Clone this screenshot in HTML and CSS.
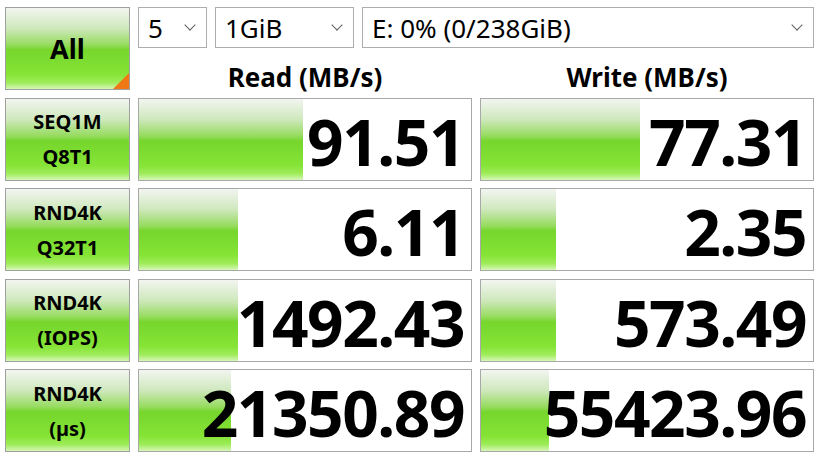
FILE: index.html
```html
<!DOCTYPE html>
<html lang="en">

<head>
  <meta charset="UTF-8">
  <title>CrystalDiskMark</title>
  <link rel="stylesheet" href="styles.css">
</head>

<body>
  <div class="app">
    <div class="top">
      <button class="test-btn all-btn">All</button>
      <div class="settings">
        <div class="combos">
          <div class="combo combo-count"><span>5</span><span class="chev"></span></div>
          <div class="combo combo-size"><span>1GiB</span><span class="chev"></span></div>
          <div class="combo combo-drive"><span>E: 0% (0/238GiB)</span><span class="chev"></span></div>
        </div>
        <div class="headers">
          <div class="col-title">Read (MB/s)</div>
          <div class="col-title">Write (MB/s)</div>
        </div>
      </div>
    </div>

    <div class="result-row">
      <button class="test-btn">SEQ1M<br>Q8T1</button>
      <div class="meter"><div class="bar" style="width: 164px"></div><span class="value">91.51</span></div>
      <div class="meter"><div class="bar" style="width: 159px"></div><span class="value">77.31</span></div>
    </div>

    <div class="result-row">
      <button class="test-btn">RND4K<br>Q32T1</button>
      <div class="meter"><div class="bar" style="width: 99px"></div><span class="value">6.11</span></div>
      <div class="meter"><div class="bar" style="width: 75px"></div><span class="value">2.35</span></div>
    </div>

    <div class="result-row">
      <button class="test-btn">RND4K<br>(IOPS)</button>
      <div class="meter"><div class="bar" style="width: 99px"></div><span class="value">1492.43</span></div>
      <div class="meter"><div class="bar" style="width: 75px"></div><span class="value">573.49</span></div>
    </div>

    <div class="result-row">
      <button class="test-btn">RND4K<br>(µs)</button>
      <div class="meter"><div class="bar" style="width: 92px"></div><span class="value">21350.89</span></div>
      <div class="meter"><div class="bar" style="width: 68px"></div><span class="value">55423.96</span></div>
    </div>
  </div>
</body>

</html>
```

FILE: styles.css
```css
body {
  margin: 0;
  padding: 0;
  background-color: #fff;
  font-family: "Noto Sans", "Open Sans", sans-serif;
  color: #000;
}

.app {
  display: flex;
  flex-direction: column;
  gap: 7.6px;
  padding: 7px 0 0 5px;
}

.top,
.result-row {
  display: grid;
  grid-template-columns: 125px 334px 334px;
  column-gap: 8px;
  height: 83px;
}

.settings {
  grid-column: 2 / 4;
  display: flex;
  flex-direction: column;
}

.combos {
  display: flex;
  gap: 8px;
  height: 41px;
}

.combo {
  display: flex;
  align-items: center;
  justify-content: space-between;
  box-sizing: border-box;
  height: 41px;
  padding: 0 10px 0 9px;
  border: 1px solid #adadad;
  background: #fff;
  font-size: 26px;
}

.combo-count {
  width: 69px;
}

.combo-size {
  width: 139px;
}

.combo-drive {
  flex: 1;
}

.chev {
  width: 7px;
  height: 7px;
  border-right: 1px solid #606060;
  border-bottom: 1px solid #606060;
  transform: rotate(45deg);
  margin-top: -6px;
  margin-right: 2px;
}

.headers {
  display: grid;
  grid-template-columns: 334px 334px;
  column-gap: 8px;
  flex: 1;
}

.col-title {
  padding-top: 8px;
  text-align: center;
  font-size: 26px;
  font-weight: bold;
  line-height: 42px;
}

.test-btn {
  position: relative;
  box-sizing: border-box;
  height: 83px;
  margin: 0;
  padding: 0;
  border: 1px solid #a0a0a0;
  background: linear-gradient(#f2f5f0 0%, #cfe8bd 25%, #98dc62 45%, #76d62c 52%, #86e436 82%, #9fec5a 92%, #d6f7b8 100%);
  font-family: inherit;
  font-size: 20px;
  font-weight: bold;
  line-height: 35px;
  color: #000;
}

.all-btn {
  font-size: 27px;
}

.all-btn::after {
  content: "";
  position: absolute;
  right: 0;
  bottom: 0;
  border-style: solid;
  border-width: 0 0 16px 16px;
  border-color: transparent transparent #f07814 transparent;
}

.meter {
  position: relative;
  display: flex;
  align-items: center;
  justify-content: flex-end;
  box-sizing: border-box;
  height: 83px;
  border: 1px solid #a8a8a8;
  background: #fff;
}

.bar {
  position: absolute;
  left: 0;
  top: 0;
  bottom: 0;
  background: linear-gradient(#f2f5f0 0%, #cfe8bd 25%, #98dc62 45%, #76d62c 52%, #86e436 82%, #9fec5a 92%, #d6f7b8 100%);
}

.value {
  position: relative;
  padding-right: 7px;
  margin-top: 4px;
  font-size: 64px;
  font-weight: bold;
  letter-spacing: -1.5px;
}
```
